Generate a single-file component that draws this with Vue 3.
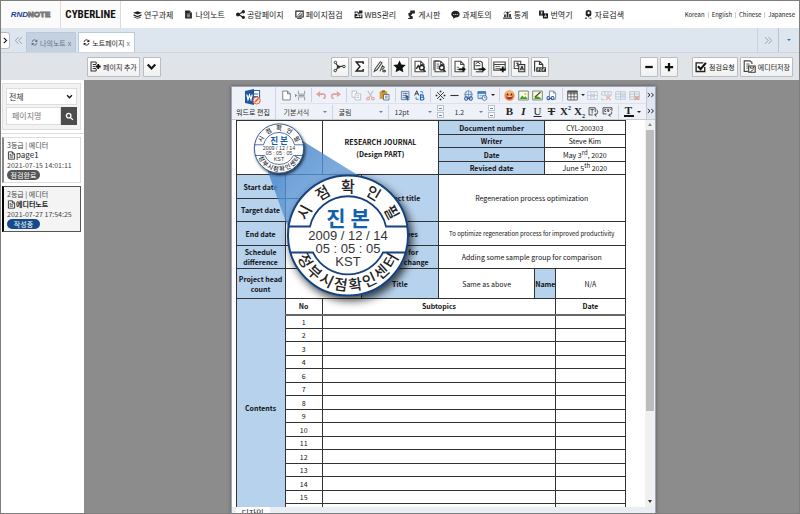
<script setup>
import { h, ref } from 'vue'

const K = '#222'
const f = (d, fill = K) => ({ d, fill })
const s = (d, stroke = K, w = 1.4, fill = 'none') => ({ d, stroke, 'stroke-width': w, fill })

const page = (c = '#444', w = 1.3) => s('M2.5 1.5h7l4 4v9h-11zM9.5 1.5v4h4', c, w, '#fff')
const lens = [s('M8 9.5a2.8 2.8 0 1 0 5.6 0a2.8 2.8 0 1 0-5.6 0M12.8 11.6l2.6 3', '#222', 1.7, '#fff')]

const icons = {
  cap: [f('M0 5l8-3 8 3-8 3z'), f('M1 7.500l7 3 7-3v2.500l-7 3-7-3z'), f('M2 12l6 2 6-2v1.500l-6 2-6-2z')],
  doc: [f('M2 1h8l4 4v10H2z'), s('M5 7h6M5 9.500h6M5 12h6', '#fff', 1), f('M10 1v4h4z', '#888')],
  share: [s('M13 3L4 8l9 5', K, 2), f('M10 3a3 3 0 1 0 6 0a3 3 0 1 0-6 0M0 8a3.500 3.500 0 1 0 7 0a3.500 3.500 0 1 0-7 0M10 13a3 3 0 1 0 6 0a3 3 0 1 0-6 0')],
  check: [s('M1.500 2h13v10.500h-13z', K, 2), s('M4 15h8', K, 1.600), s('M5 10l5-5.500M7 10.500h4V6', K, 1.500)],
  wbs: [s('M2 6V3.500h4l1.500 2H10M2 10v3.500h12V8', K, 2), f('M9 1h6v5H9zM1 7h5v4H1z'), s('M7 9h5M10 9v3', K, 1.500)],
  board: [f('M6 1h8v5H9.500L8 9H5z'), f('M2 6l4-2 1 6 3 1v3H6l-3-4z'), f('M2 14h8v2H2z')],
  talk: [f('M8 1.500c4.500 0 7.500 2.600 7.500 6s-3 6-7.500 6l-4 2v-3C1.700 11.300.5 9.500.5 7.500c0-3.400 3-6 7.500-6z'), f('M4 7h2v1.500H4zM7.200 7h2v1.500h-2zM10.400 7h2v1.500h-2z', '#fff')],
  stats: [s('M0 14.500h16', K, 2), f('M2 8h3v5H2zM6.500 3h3v10h-3zM11 7h3v6h-3z'), s('M1 6l4-3 3 3 6-4', K, 1.200)],
  trans: [f('M0 1h9v9H0z'), f('M7 6h9v9H7z', '#111'), s('M2.500 3.500h4M4.500 3v4M3 8l3-2.500', '#fff', 1.100), s('M9.500 13l2-5 2 5M10 11.500h3', '#fff', 1.100)],
  search2: [f('M3 4a5 4 0 0 1 10 0v4a5 3.500 0 0 1-10 0z'), f('M6.500 3h3.500v4H6.500z', '#fff'), s('M8 11v2', K, 2), s('M2 16l1.500-3L5 16M11 13v3h3', K, 1.300)],
  reload: [s('M2.500 7A5.500 5.500 0 0 1 13 5M13.500 9A5.500 5.500 0 0 1 3 11', 'currentColor', 2), f('M14.500 1v6h-6zM1.500 15V9h6z', 'currentColor')],
  addpage: [s('M9 1.500H1.500v13H9M4 5h5M4 8h4M4 11h5', '#333', 1.500), s('M9 1.500v3M9 11.500v3', '#333', 1.500), s('M8.500 8h7M12 4.500v7', '#111', 2.600)],
  chevron: [s('M2.500 5l5.500 6 5.500-6', '#111', 3)],
  molecule: [s('M6.500 8.500L3 3M6.500 8.500L3 13.500M6.500 8.500l6-1', '#333', 1.400), f('M4.500 8.500a2 2 0 1 0 4 0a2 2 0 1 0-4 0', '#333'), s('M1.500 3a1.500 1.500 0 1 0 3 0a1.500 1.500 0 1 0-3 0M1.200 13a1.500 1.500 0 1 0 3 0a1.500 1.500 0 1 0-3 0M12 8a1.500 1.500 0 1 0 3 0a1.500 1.500 0 1 0-3 0', '#333', 1.200, '#fff')],
  sigma: [s('M12.500 5V2.500H4L8.500 8 4 13.500h8.500V11', '#222', 1.800)],
  pencilnote: [s('M2.500 11L9 2l2 1.500-6 8.500-3.500 2zM8.500 14l3.500-8M10.500 9.500c1-2 4-2 3 0s-3 1-2 2.500 4 0 4 1.500-3 1.500-4 0', '#444', 1.300)],
  star: [f('M8 .5l2.300 5 5.400.6-4 3.700 1.100 5.400L8 12.500l-4.800 2.700 1.100-5.400-4-3.700 5.400-.6z', '#111')],
  imgsearch: [page(), s('M4 11l2.500-4 2 3', '#333', 1.800), ...lens],
  pagesearch: [page(), s('M4.500 5h3M4.500 7.500h3M4.500 10h3', '#333', 1), s('M1 12.500V1h7', '#333', 1), ...lens],
  pageout: [page(), s('M4.500 9h3M4.500 11.500h3', '#555', 1), s('M7 11.500h6', '#111', 2.400), f('M11.500 8l4.500 3.500-4.500 3.500z', '#111')],
  copyout: [s('M1.500 1.500h8l2 2v8h-10z', '#333', 1.300), s('M3 5l3-2.500L9 5M3 7h6', '#333', 1.200), s('M3.500 14.500h9', '#333', 1.300), s('M7 11.500h6', '#111', 2.400), f('M11.500 8l4.500 3.500-4.500 3.500z', '#111')],
  formadd: [s('M1 2.500h14v10H1zM1 5.500h14', '#444', 1.400), s('M3 8h6M3 10.500h6', '#666', 1.300), s('M8.500 11.500h7M12 8v7', '#111', 2.200)],
  langswap: [s('M1.500 1.500h8v9h-8z', '#444', 1.300, '#fff'), s('M3.500 4h4M5.500 3v5M3.500 8l3-3', '#444', 1), s('M7 5.500h7.500v9H7z', '#333', 1.300, '#ddd'), s('M9 12.500l2-5 2 5M9.500 11h3', '#222', 1.200)],
  pdf: [s('M2 14V1.500h6l4 4V9M8 1.500v4h4', '#333', 1.400, '#fff'), f('M4 9h12v5.500H4z', '#222'), s('M6 13.500v-3h1.500v1.500H6M9.500 10.500v3h1l.8-.8v-1.500l-.8-.7zM13 13.500v-3h2M13 12h1.500', '#fff', .8)],
  minus: [s('M3 8h10', '#111', 3)],
  plus: [s('M2.500 8h11M8 2.500v11', '#111', 3)],
  tick: [s('M13 8v6H1.500V2.500H11', '#222', 1.800, '#fff'), s('M4 7l3.500 4L14.500 2.500', '#111', 2.800)],
  savedoc: [s('M11 5V3L8.500 1H1.500v13H6', '#444', 1.400, '#fff'), s('M4 5h4M4 7.500h3M4 10h2', '#555', 1.200), s('M7 7.500h8v7.500H7z', '#333', 1.300, '#fff'), s('M9 8v2h4V8M9 14.500l4-3', '#333', 1.200)],
  find: [s('M2.500 6.500a4 4 0 1 0 8 0a4 4 0 1 0-8 0M9.500 9.500l4.500 4.500', '#fff', 2.400)],
  file: [page('#222', 1.500), s('M4.500 6h3M4.500 8.500h6.500M4.500 11h6.500', '#222', 1.300)],
  left2: [s('M8 2L2.500 8 8 14M14 2L8.500 8l5.500 6', '#8295a8', 1.400)],
  right2: [s('M2 2l5.500 6L2 14M8 2l5.500 6L8 14', '#8295a8', 1.400)],
  right: [s('M4 2l6.500 6L4 14', '#111', 2.400)],
  more: [s('M1.500 4l4.500 4-4.500 4M8.500 4L13 8l-4.500 4', '#223', 2)],
  word: [s('M7 1.500h7.500v12H7M9 5h4M9 7.500h4', '#3c66a8', 1.200, '#fff'), f('M0 2l9-2v16L0 14z', '#20559c'), s('M1.800 5.500l1.200 5 1.500-4.500L6 10.500l1.200-5', '#fff', 1.200), s('M8.200 11.500a3.500 3.500 0 1 0 7 0a3.500 3.500 0 1 0-7 0', '#e8643c', 1, '#fde4da'), s('M10 13l3.500-3.500', '#e0502c', 1.500)],
  blank: [page('#777')],
  pagebreak: [s('M5 1v5h9V1M5 15v-5h9v5M5 8h9', '#8a94a0', 1.300), f('M0 5.500L3.500 8 0 10.500z', '#6b8fc0')],
  undo: [s('M4 6h6.500a3 3 0 0 1 0 6', '#e0a39c', 2.200), f('M6 1.500V10.500L0 6z', '#e0a39c')],
  redo: [s('M12 6H5.500a3 3 0 0 0 0 6', '#e0a39c', 2.200), f('M10 1.500V10.500L16 6z', '#e0a39c')],
  copy: [s('M1.500 1.500h6.500v9H1.500z', '#b4bcc6', 1.300, '#fff'), s('M6 5.500h8v9H6zM8 8.500h4M8 11h4', '#b4bcc6', 1.300, '#fff')],
  cut: [s('M4 1l6 9.500M12 1L6 10.500', '#b8bfc8', 1.700), s('M2.500 12.500a2 2 0 1 0 4 0a2 2 0 1 0-4 0M9.500 12.500a2 2 0 1 0 4 0a2 2 0 1 0-4 0', '#e2a49a', 1.600)],
  paste: [f('M1 2h11v11H1z', '#d99a2b'), f('M4 .5h5v3H4z', '#8a6a35'), s('M6.500 6.500h8v8h-8zM8.500 9h4M8.500 11.500h4', '#4a5f85', 1.200, '#fff')],
  select: [s('M2 2h11v12H2zM4 5h7M4 8h4M4 11h3', '#5f7694', 1.300, '#dce7f5'), f('M8 6l6 5h-3l1.500 3.500-1.800.8L9.300 12 8 13.500z', '#24539a')],
  replace: [s('M1 8L4 1l3 7M2 5.500h4', '#333', 1.300), s('M9.500 7v7.500h3a2 2 0 0 0 0-4h-3 2.500a1.700 1.700 0 0 0 0-3.500z', '#2467b8', 1.700), s('M9 2.500h3.500V5M3 10v3.500h4', '#3a8cd0', 1.400)],
  mark: [s('M3 3l10 10M13 3L3 13', '#222', 1.300), f('M6.800 1h2.400v2.400H6.800zM6.800 12.600h2.400V15H6.800zM1 6.800h2.400v2.400H1zM12.600 6.800H15v2.400h-2.400z', '#222')],
  rule: [s('M2 8h12', '#333', 1.600)],
  globe: [s('M2.500 6.500a5.500 5.500 0 1 0 11 0a5.500 5.500 0 1 0-11 0M8 1v11M2.500 6.500h11M5 2.500c-1.500 3-1.500 5 0 8M11 2.500c1.500 3 1.500 5 0 8', '#5d87b8', 1.100, '#e3eef9'), s('M7 12a2 2 0 0 0-4.500 0a2 2 0 0 0 4.500 1M9 12a2 2 0 0 1 4.500 0a2 2 0 0 1-4.500 1M5.500 12.500h5', '#2a5a9a', 1.500)],
  date: [s('M1.500 2.500h11v10h-11z', '#4f82bf', 1.400, '#e9f2fb'), f('M1 2h12v3.500H1z', '#3f79bd'), s('M3.500 8h7M3.500 10.500h4', '#88a9cf', 1.200), s('M7.500 11.500a3.500 3.500 0 1 0 7 0a3.500 3.500 0 1 0-7 0M11 9.500v2h1.500', '#2f66a8', 1.200, '#fff')],
  smile: [f('M.5 8a7.500 7.500 0 1 0 15 0a7.500 7.500 0 1 0-15 0', '#ef8a4c'), f('M2 6.500a6 5 0 0 1 12 0z', '#f9b874'), f('M4 5h2.200v2.500H4zM9.800 5H12v2.500H9.800z', '#402010'), f('M3.500 9h9a4.500 4.500 0 0 1-9 0z', '#b22320'), f('M5 9h6v1.300H5z', '#fff')],
  image: [s('M1 1.500h14v13H1z', '#6b7f5f', 1.300, '#f1fbe5'), f('M2.500 13l3.500-5 3 3 2-2 3 4z', '#4b9a2e'), f('M9.500 4.500h2.500V7H9.500z', '#f1b52c')],
  imgedit: [s('M1 1.500h14v13H1z', '#6b7f5f', 1.300, '#f1fbe5'), f('M2.500 13l4-4 4 1 3.500 3z', '#4b9a2e'), s('M4 10.500L12.500 3', '#6a4a20', 2)],
  linkdoc: [s('M5 9V1.500h6l3 3v9H10M11 1.500v3h3', '#6a86aa', 1.300, '#fff'), s('M5.500 11.500a2 2 0 0 0-4 0a2 2 0 0 0 4 1M7.500 11.500a2 2 0 0 1 4 0a2 2 0 0 1-4 1M4 12.500h5', '#2a5a9a', 1.500)],
  table: [s('M1 1.500h14v13H1zM1 5.500h14M1 10h14M5.700 1.500v13M10.300 1.500v13', '#444', 1.200, '#fff'), f('M1 1h14v3H1z', '#555')],
  cellblue: [s('M1 2.500h14v11H1zM1 8h14M5.700 2.500v11M10.300 2.500v11', '#b9c3d0', 1.200, '#f4f7fb'), f('M5 6h6v4H5z', '#b9cfe8')],
  rowdel: [s('M1 2.500h14v5H1zM5.700 2.500v5M10.300 2.500v5M1 11v3h4', '#b9c3d0', 1.200), s('M7 8l7 6.500M14 8l-7 6.500', '#e6b3ac', 1.700)],
  coladd: [s('M1 2.500h14v11H1zM1 6h14M1 10h14M8 2.500v11', '#b9c3d0', 1.200), f('M9 5h5v6H9z', '#c5d8ec')],
  tabledel: [s('M1 2.500h14v11H1zM1 6h14M1 10h14M8 2.500v11', '#b4bcc6', 1.200), s('M8.500 8.500l6 6M14.500 8.500l-6 6', '#e29a90', 1.900)],
  size: [s('M10.500 9V2.500h-9V13H7M3.500 5h5M6 5v6', '#333', 1.200), s('M12.500 5c2.500 3 2 7-2.500 8M12 10.500L9.500 13l3 2', '#333', 1.200)],
  css: [s('M14.500 7V2.500h-13v9h5M6 5H4v3h2M10 5H8v1.500h2V8H8M13 5h-1.500', '#333', 1.200), s('M13.500 8c1.500 2.500 0 5-3 5.500M12 11l-2.500 2.500 3 1.500', '#333', 1.200)]
}

const Icon = (p) => h('svg', { viewBox: '0 0 16 16', width: p.size || 10, height: p.size || 10, 'aria-hidden': 'true' }, icons[p.name].map((a) => h('path', a)))
Icon.props = ['name', 'size']

const nav = [
  ['cap', '연구과제'], ['doc', '나의노트'], ['share', '공람페이지'], ['check', '페이지점검'], ['wbs', 'WBS관리'],
  ['board', '게시판'], ['talk', '과제토의'], ['stats', '통계'], ['trans', '번역기'], ['search2', '자료검색']
]
const langs = ['Korean', 'English', 'Chinese', 'Japanese']
const tools = ['molecule', 'sigma', 'pencilnote', 'star', 'imgsearch', 'pagesearch', 'pageout', 'copyout', 'formadd', 'langswap', 'pdf']
const row1 = [
  ['blank', 'pagebreak'], ['undo', 'redo'], ['copy', 'cut', 'paste'], ['select', 'replace'],
  ['mark', 'rule', 'globe', 'date', '▾'], ['smile', 'image', 'imgedit', 'linkdoc'],
  ['table', '▾', 'cellblue', 'rowdel', 'coladd', 'tabledel']
]
const entries = [1, 2, 3, 4, 6, 7, 8, 9, 10, 11, 12, 13, 14, 15, 16]
const pages = [
  { grade: '3등급 | 에디터', title: 'page1', time: '2021-07-15 14:01:11', state: '점검완료', active: false },
  { grade: '2등급 | 에디터', title: '에디터노트', time: '2021-07-27 17:54:25', state: '작성중', active: true }
]
const filter = ref('전체')

const upper = [...'시점확인필'].map((c, i) => ({ c, a: (i - 2) * 31 }))
const lower = [...'정부시점확인센터'].map((c, i) => ({ c, a: (3.5 - i) * 17 }))
const seals = [
  { key: 'small', t: 'translate(29 28.500) scale(.41)' },
  { key: 'large', t: 'translate(98 115.500)' }
]
</script>

<template>
  <div class="app">
    <header class="top">
      <a href="#" class="logo rnd"><b>RND</b><span>NOTE</span></a>
      <a href="#" class="logo cyber">CYBERLINE</a>
      <nav class="menu">
        <a v-for="[icon, label] in nav" :key="label" href="#"><Icon :name="icon" :size="9" />{{ label }}</a>
      </nav>
      <div class="langs">
        <a v-for="l in langs" :key="l" href="#">{{ l }}</a>
      </div>
    </header>

    <div class="tabs">
      <button class="expand" aria-label="펼치기"><Icon name="right" :size="7" /></button>
      <button class="plain" aria-label="이전 탭"><Icon name="left2" :size="9" /></button>
      <a href="#" class="tab"><Icon name="reload" :size="7" />나의노트 <i>x</i></a>
      <a href="#" class="tab on"><Icon name="reload" :size="7" />노트페이지 <i>x</i></a>
      <button class="plain next" aria-label="다음 탭"><Icon name="right2" :size="9" /></button>
      <button class="plain drop" aria-label="탭 목록"><span class="tri blue"></span></button>
    </div>

    <div class="tools">
      <div class="group wide">
        <button class="btn"><Icon name="addpage" :size="11" />페이지 추가</button>
        <button class="btn sq" aria-label="더보기"><Icon name="chevron" :size="11" /></button>
      </div>
      <div class="group mid">
        <button v-for="t in tools" :key="t" class="btn sq" :aria-label="t"><Icon :name="t" :size="13" /></button>
      </div>
      <div class="group zoomers">
        <button class="btn sq" aria-label="축소"><Icon name="minus" :size="12" /></button>
        <button class="btn sq" aria-label="확대"><Icon name="plus" :size="12" /></button>
      </div>
      <div class="group">
        <button class="btn"><Icon name="tick" :size="12" />점검요청</button>
        <button class="btn"><Icon name="savedoc" :size="13" />에디터저장</button>
      </div>
    </div>

    <div class="body">
      <aside class="side">
        <div class="filter">
          <div class="pick">
            <select v-model="filter" aria-label="구분"><option>전체</option></select>
            <Icon name="chevron" :size="7" />
          </div>
          <div class="find">
            <input type="text" placeholder="페이지명" aria-label="페이지명">
            <button aria-label="검색"><Icon name="find" :size="9" /></button>
          </div>
        </div>
        <div class="list">
          <article v-for="p in pages" :key="p.title" class="card" :class="{ active: p.active }">
            <div class="meta">{{ p.grade }}</div>
            <div class="name"><Icon name="file" :size="9" />{{ p.title }}</div>
            <div class="time">{{ p.time }}</div>
            <span class="pill">{{ p.state }}</span>
          </article>
        </div>
      </aside>

      <main class="stage">
        <section class="editor">
          <div class="bar">
            <button class="word"><Icon name="word" :size="16" />워드로 편집</button>
            <div class="rows">
              <div class="row">
                <div v-for="(g, i) in row1" :key="i" class="set">
                  <template v-for="n in g" :key="n">
                    <button v-if="n === '▾'" class="caret" aria-label="옵션"><span class="tri"></span></button>
                    <button v-else class="ic" :aria-label="n"><Icon :name="n" :size="11" /></button>
                  </template>
                </div>
              </div>
              <div class="row">
                <div class="combo w53"><select aria-label="서식"><option>기본서식</option></select><span class="tri steel"></span></div>
                <div class="combo w56"><select aria-label="글꼴"><option>굴림</option></select><span class="tri steel"></span></div>
                <div class="combo w48"><select aria-label="글자 크기"><option>12pt</option></select><span class="tri steel"></span></div>
                <span class="spin"><button aria-label="크게"></button><button aria-label="작게"></button></span>
                <div class="combo w44"><select aria-label="줄 간격"><option>1.2</option></select><span class="tri steel"></span></div>
                <span class="spin last"><button aria-label="늘림"></button><button aria-label="줄임"></button></span>
                <div class="set fmt">
                  <button class="ic"><b>B</b></button>
                  <button class="ic"><b><i>I</i></b></button>
                  <button class="ic"><u>U</u></button>
                  <button class="ic"><b><s>T</s></b></button>
                  <button class="ic"><b>X<sup>2</sup></b></button>
                  <button class="ic"><b>X<sub>2</sub></b></button>
                  <button class="ic" aria-label="size"><Icon name="size" :size="11" /></button>
                  <button class="ic" aria-label="css"><Icon name="css" :size="11" /></button>
                </div>
                <div class="set fmt">
                  <button class="ic color"><b>T</b></button>
                  <button class="caret" aria-label="글자색"><span class="tri"></span></button>
                </div>
              </div>
            </div>
            <div class="mores">
              <button aria-label="더보기"><Icon name="more" :size="8" /></button>
              <button aria-label="더보기"><Icon name="more" :size="8" /></button>
            </div>
          </div>

          <div class="canvas">
            <div class="paper">
              <table class="journal">
                <colgroup>
                  <col class="c1"><col class="c2"><col class="c3"><col class="c4"><col class="c5"><col class="c6"><col class="c7"><col class="c8">
                </colgroup>
                <tbody>
                  <tr class="odd">
                    <td rowspan="4" colspan="2"></td>
                    <th rowspan="4" colspan="2" class="clear title">RESEARCH JOURNAL<br>(Design PART)</th>
                    <th colspan="2">Document number</th><td colspan="2">CYL-200303</td>
                  </tr>
                  <tr class="even"><th colspan="2">Writer</th><td colspan="2">Steve Kim</td></tr>
                  <tr class="odd"><th colspan="2">Date</th><td colspan="2">May 3<sup>rd</sup>, 2020</td></tr>
                  <tr class="even"><th colspan="2">Revised date</th><td colspan="2">June 5<sup>th</sup> 2020</td></tr>
                  <tr class="tall">
                    <th>Start date</th><td colspan="2">May</td>
                    <th rowspan="2">Project title</th><td rowspan="2" colspan="4">Regeneration process optimization</td>
                  </tr>
                  <tr class="tall less"><th>Target date</th><td colspan="2"></td></tr>
                  <tr class="tall"><th>End date</th><td colspan="2"></td><th>Objectives</th><td colspan="4" class="fine">To optimize regeneration process for improved productivity</td></tr>
                  <tr class="tall less"><th>Schedule<br>difference</th><td colspan="2"></td><th>Reason for<br>schedule change</th><td colspan="4">Adding some sample group for comparison</td></tr>
                  <tr class="taller"><th>Project head<br>count</th><td colspan="2"></td><th>Title</th><td>Same as above</td><th colspan="2">Name</th><td>N/A</td></tr>
                  <tr class="headrow">
                    <th :rowspan="entries.length + 1">Contents</th>
                    <th class="clear">No</th><th class="clear" colspan="5">Subtopics</th><th class="clear">Date</th>
                  </tr>
                  <tr v-for="(n, i) in entries" :key="n" :class="i % 2 ? 'even' : 'odd'">
                    <td>{{ n }}</td><td colspan="5"></td><td></td>
                  </tr>
                </tbody>
              </table>

              <svg class="seal" viewBox="0 0 190 190" width="190" height="190">
                <defs>
                  <linearGradient id="beam" x1="0" y1="0" x2="1" y2="1">
                    <stop offset="0" stop-color="#3f80c8" stop-opacity=".85" />
                    <stop offset="1" stop-color="#7fb0e4" stop-opacity=".75" />
                  </linearGradient>
                  <filter id="shade" x="-20%" y="-20%" width="150%" height="150%">
                    <feDropShadow dx="3" dy="4" stdDeviation="4" flood-color="#000" flood-opacity=".75" />
                  </filter>
                </defs>
                <path d="M17 49L51 20L132 70L98 116L38 108Z" fill="url(#beam)" />
                <g v-for="m in seals" :key="m.key" :transform="m.t">
                  <circle r="60" fill="#fff" stroke="#17427f" stroke-width="2" filter="url(#shade)" />
                  <path d="M-60-9H-38A39 39 0 0 1 38-9H60M-58 17H-35A39 39 0 0 0 35 17H58" fill="none" stroke="#17427f" stroke-width="1.800" />
                  <text v-for="g in upper" :key="g.a" class="ring" :transform="`rotate(${g.a}) translate(0 -44)`">{{ g.c }}</text>
                  <text v-for="g in lower" :key="g.a" class="ring" :transform="`rotate(${g.a}) translate(0 55)`">{{ g.c }}</text>
                  <text class="real" y="-10">진 본</text>
                  <text class="stamp" y="4">2009 / 12 / 14</text>
                  <text class="stamp" y="17">05 : 05 : 05</text>
                  <text class="stamp" y="30">KST</text>
                </g>
              </svg>
            </div>
            <div class="scroll">
              <span class="up"></span>
              <span class="thumb"></span>
              <span class="down"></span>
            </div>
          </div>
          <div class="foot"><button>디자인</button></div>
        </section>
      </main>
    </div>
  </div>
</template>

<style>
body {
  margin: 0;
}
</style>

<style scoped>
.app {
  box-sizing: border-box;
  display: flex;
  flex-direction: column;
  height: 100vh;
  border: 1px solid #7e7e7e;
  background: #fff;
  color: #222;
  font: 8px/12px "Noto Sans CJK KR", sans-serif;
  overflow: hidden;
}
.app * {
  box-sizing: border-box;
}
a {
  color: inherit;
  text-decoration: none;
}
button {
  display: flex;
  align-items: center;
  justify-content: center;
  padding: 0;
  border: 0;
  background: none;
  color: inherit;
  font: inherit;
  white-space: nowrap;
}
svg {
  flex: none;
}
.top {
  display: flex;
  flex: none;
  height: 27px;
}
.logo {
  display: flex;
  flex: none;
  align-items: center;
  justify-content: center;
  width: 60px;
  border-right: 1px solid #dcdcdc;
  background: #fbfbfb;
}
.rnd {
  font: italic 8px/12px "Liberation Sans", sans-serif;
}
.rnd b {
  color: #1d3f94;
}
.rnd span {
  color: #fff;
  font-style: normal;
  font-weight: bold;
  -webkit-text-stroke: 1px #777;
}
.cyber {
  color: #111;
  font: bold 11px/14px "Roboto Condensed", "Open Sans Condensed", Roboto, sans-serif;
}
.menu {
  display: flex;
  align-items: center;
  gap: 11px;
  padding-left: 12px;
  white-space: nowrap;
}
.menu a {
  display: flex;
  align-items: center;
  gap: 2px;
}
.langs {
  display: flex;
  align-items: center;
  margin-left: auto;
  padding-right: 4px;
  font-size: 6px;
}
.langs a + a {
  margin-left: 3px;
  padding-left: 3px;
  border-left: 1px solid #ccc;
  line-height: 6px;
}
.tabs {
  display: flex;
  flex: none;
  align-items: flex-end;
  height: 25px;
  border-bottom: 1px solid #cbd5e2;
  background: #dde5ef;
}
.expand {
  width: 9px;
  height: 17px;
  margin-bottom: 3px;
  border: 1px solid #b5bac2;
  border-left: 0;
  border-radius: 0 3px 3px 0;
  background: #fff;
}
.plain {
  width: 16px;
  height: 24px;
}
.tab {
  display: flex;
  align-items: center;
  gap: 2px;
  height: 20px;
  padding: 0 4px;
  border: 1px solid #b9c8da;
  border-bottom: 0;
  background: #c4d1e1;
  color: #5f7083;
  font-size: 7px;
}
.tab i {
  color: #778;
  font-style: normal;
}
.tab.on {
  margin-left: 2px;
  background: #fff;
  color: #222;
}
.next {
  width: 21px;
  margin-left: auto;
  border-left: 1px solid #c9d2de;
}
.drop {
  width: 21px;
  border-left: 1px solid #b8c3d0;
}
.tri {
  width: 0;
  height: 0;
  border: 2px solid transparent;
  border-top-color: #222;
  border-bottom: 0;
}
.tri.blue {
  border-top-color: #2779b8;
}
.tri.steel {
  border-top-color: #5f83a0;
}
.tools {
  display: flex;
  flex: none;
  align-items: center;
  height: 27px;
  padding: 0 6px 0 86px;
  background: #e0e4e9;
}
.group {
  display: flex;
  gap: 2px;
}
.wide {
  gap: 3px;
}
.mid {
  margin-left: 170px;
}
.zoomers {
  margin: 0 14px 0 auto;
}
.btn {
  gap: 2px;
  height: 20px;
  padding: 0 2px;
  border: 1px solid #b9bcc0;
  border-radius: 1px;
  background: linear-gradient(#fff, #f1f1f1);
  font-size: 7px;
}
.sq {
  width: 18px;
  padding: 0;
}
.body {
  display: flex;
  flex: 1;
  min-height: 0;
}
.side {
  flex: none;
  width: 83px;
  background: #fff;
}
.filter {
  display: flex;
  flex-direction: column;
  gap: 2px;
  margin: 3px 3px 3px 1px;
  padding: 4px 3px;
  border: 1px solid #ddd;
  background: #f3f3f3;
}
.pick {
  display: flex;
  align-items: center;
  height: 17px;
  padding-right: 3px;
  border: 1px solid #ddd;
  background: #fff;
}
select {
  flex: 1;
  min-width: 0;
  padding: 0 0 0 2px;
  border: 0;
  appearance: none;
  background: none;
  color: #333;
  font: inherit;
}
.find {
  display: flex;
  height: 18px;
}
.find input {
  flex: 1;
  min-width: 0;
  padding: 0 5px;
  border: 1px solid #ddd;
  font: inherit;
}
.find input::placeholder {
  color: #777;
}
.find button {
  width: 16px;
  background: #4c4c4c;
}
.list {
  display: flex;
  flex-direction: column;
  gap: 3px;
  padding: 3px 3px 0 1px;
  border-top: 1px solid #ddd;
}
.card {
  height: 46px;
  padding: 2px 3px;
  border: 1px solid #ddd;
  border-left: 2px solid #888;
  line-height: 10px;
  white-space: nowrap;
}
.card.active {
  border-color: #555;
  border-left-color: #000;
  background: #f4f4f4;
}
.name {
  display: flex;
  align-items: center;
}
.active .name {
  font-size: 7px;
  font-weight: bold;
}
.meta,
.time {
  color: #444;
  font-size: 7px;
}
.pill {
  display: block;
  width: 33px;
  border-radius: 5px;
  background: #555;
  color: #fff;
  font-size: 7px;
  text-align: center;
}
.active .pill {
  background: #174a8b;
}
.stage {
  display: flex;
  flex: 1;
  justify-content: center;
  padding: 6px 0 0 3px;
  background: #8c8c8c;
}
.editor {
  display: flex;
  flex-direction: column;
  width: 100%;
  max-width: 425px;
  border: 1px solid #9ba7b8;
  border-bottom: 0;
  background: #fff;
  box-shadow: 0 0 3px #555;
}
.bar {
  display: flex;
  flex: none;
  height: 33px;
  border-bottom: 1px solid #c4ccd8;
  background: #eef2f8;
  font-size: 7px;
}
.word {
  flex-direction: column;
  gap: 1px;
  width: 44px;
  margin-right: 4px;
  border-right: 1px solid #cdd5e0;
}
.rows {
  display: flex;
  flex: 1;
  flex-direction: column;
}
.row {
  display: flex;
  align-items: center;
  height: 16px;
}
.row + .row {
  border-top: 1px solid #dbe2ec;
}
.set {
  display: flex;
  align-items: center;
}
.set + .set {
  margin-left: 3px;
  padding-left: 3px;
  border-left: 1px solid #ccd3de;
}
.ic {
  width: 14px;
  height: 14px;
}
.caret {
  width: 6px;
  height: 14px;
}
.combo {
  display: flex;
  align-items: center;
  height: 14px;
  padding: 0 5px 0 2px;
  border-right: 1px solid #ccd3de;
}
.w53 {
  width: 53px;
}
.w56 {
  width: 56px;
  padding-left: 4px;
}
.w48 {
  width: 48px;
  padding-left: 4px;
  border: 0;
}
.w44 {
  width: 44px;
  padding-left: 9px;
  border: 0;
}
.spin {
  display: flex;
  flex-direction: column;
  gap: 1px;
  width: 7px;
}
.spin.last {
  margin-right: 8px;
}
.spin button {
  height: 6px;
  border: 1px solid #b9c3d0;
  background: #fff;
}
.spin button::after {
  width: 3px;
  height: 1px;
  background: #5f83a0;
  content: "";
}
.fmt {
  font: 11px/13px "Liberation Serif", serif;
}
.fmt sup,
.fmt sub {
  font-size: 6px;
  line-height: 0;
}
.color b {
  width: 10px;
  border-bottom: 2px solid #111;
  line-height: 9px;
}
.mores {
  width: 9px;
  border-left: 1px solid #c4ccd8;
  background: #e0e6ef;
}
.mores button {
  width: 8px;
  height: 16px;
}
.canvas {
  display: flex;
  flex: 1;
  min-height: 0;
}
.paper {
  position: relative;
  flex: 1;
  padding: 0 19px 0 4px;
  overflow: hidden;
}
.journal {
  width: 100%;
  border-collapse: collapse;
  table-layout: fixed;
  color: #111;
  font: 7px/10px "Noto Sans CJK KR", sans-serif;
  text-align: center;
}
.c1 { width: 49px; }
.c2 { width: 37px; }
.c3 { width: 39px; }
.c4 { width: 77px; }
.c5 { width: 96px; }
.c6 { width: 10px; }
.c7 { width: 11px; }
.c8 { width: 69px; }
.journal td,
.journal th {
  padding: 0;
  border: 1px solid #333;
}
.journal th {
  background: #b7d2ed;
}
.journal th.clear {
  background: none;
}
.journal .headrow .clear {
  border-bottom: 2px solid #666;
}
.journal .title {
  line-height: 12px;
}
.journal .fine {
  font-size: 6px;
}
.journal sup {
  font-size: 6px;
  line-height: 0;
}
.odd { height: 14px; }
.even { height: 13px; }
.tall { height: 24px; }
.less { height: 23px; }
.taller { height: 30px; }
.headrow { height: 16px; }
.seal {
  position: absolute;
  top: 0;
  left: 18px;
}
.seal text {
  text-anchor: middle;
}
.ring {
  fill: #222;
  font: 500 15px "Noto Sans CJK KR", sans-serif;
}
.real {
  fill: #1560ac;
  font: bold 21px "Noto Sans CJK KR", sans-serif;
}
.stamp {
  fill: #333;
  font: 13px "Liberation Sans", sans-serif;
}
.scroll {
  display: flex;
  flex-direction: column;
  align-items: center;
  width: 10px;
  padding: 3px 0 4px;
  background: #f0f0f0;
}
.up,
.down {
  border: 2px solid transparent;
}
.up {
  border-top: 0;
  border-bottom: 3px solid #888;
}
.down {
  margin-top: auto;
  border-top: 3px solid #333;
  border-bottom: 0;
}
.thumb {
  width: 8px;
  height: 74%;
  margin-top: 4px;
  background: #bcbcbc;
}
.foot {
  flex: none;
  height: 6px;
  padding-left: 4px;
  background: #e9edf4;
  overflow: hidden;
}
.foot button {
  width: 34px;
  background: #fff;
  line-height: 12px;
}
</style>
